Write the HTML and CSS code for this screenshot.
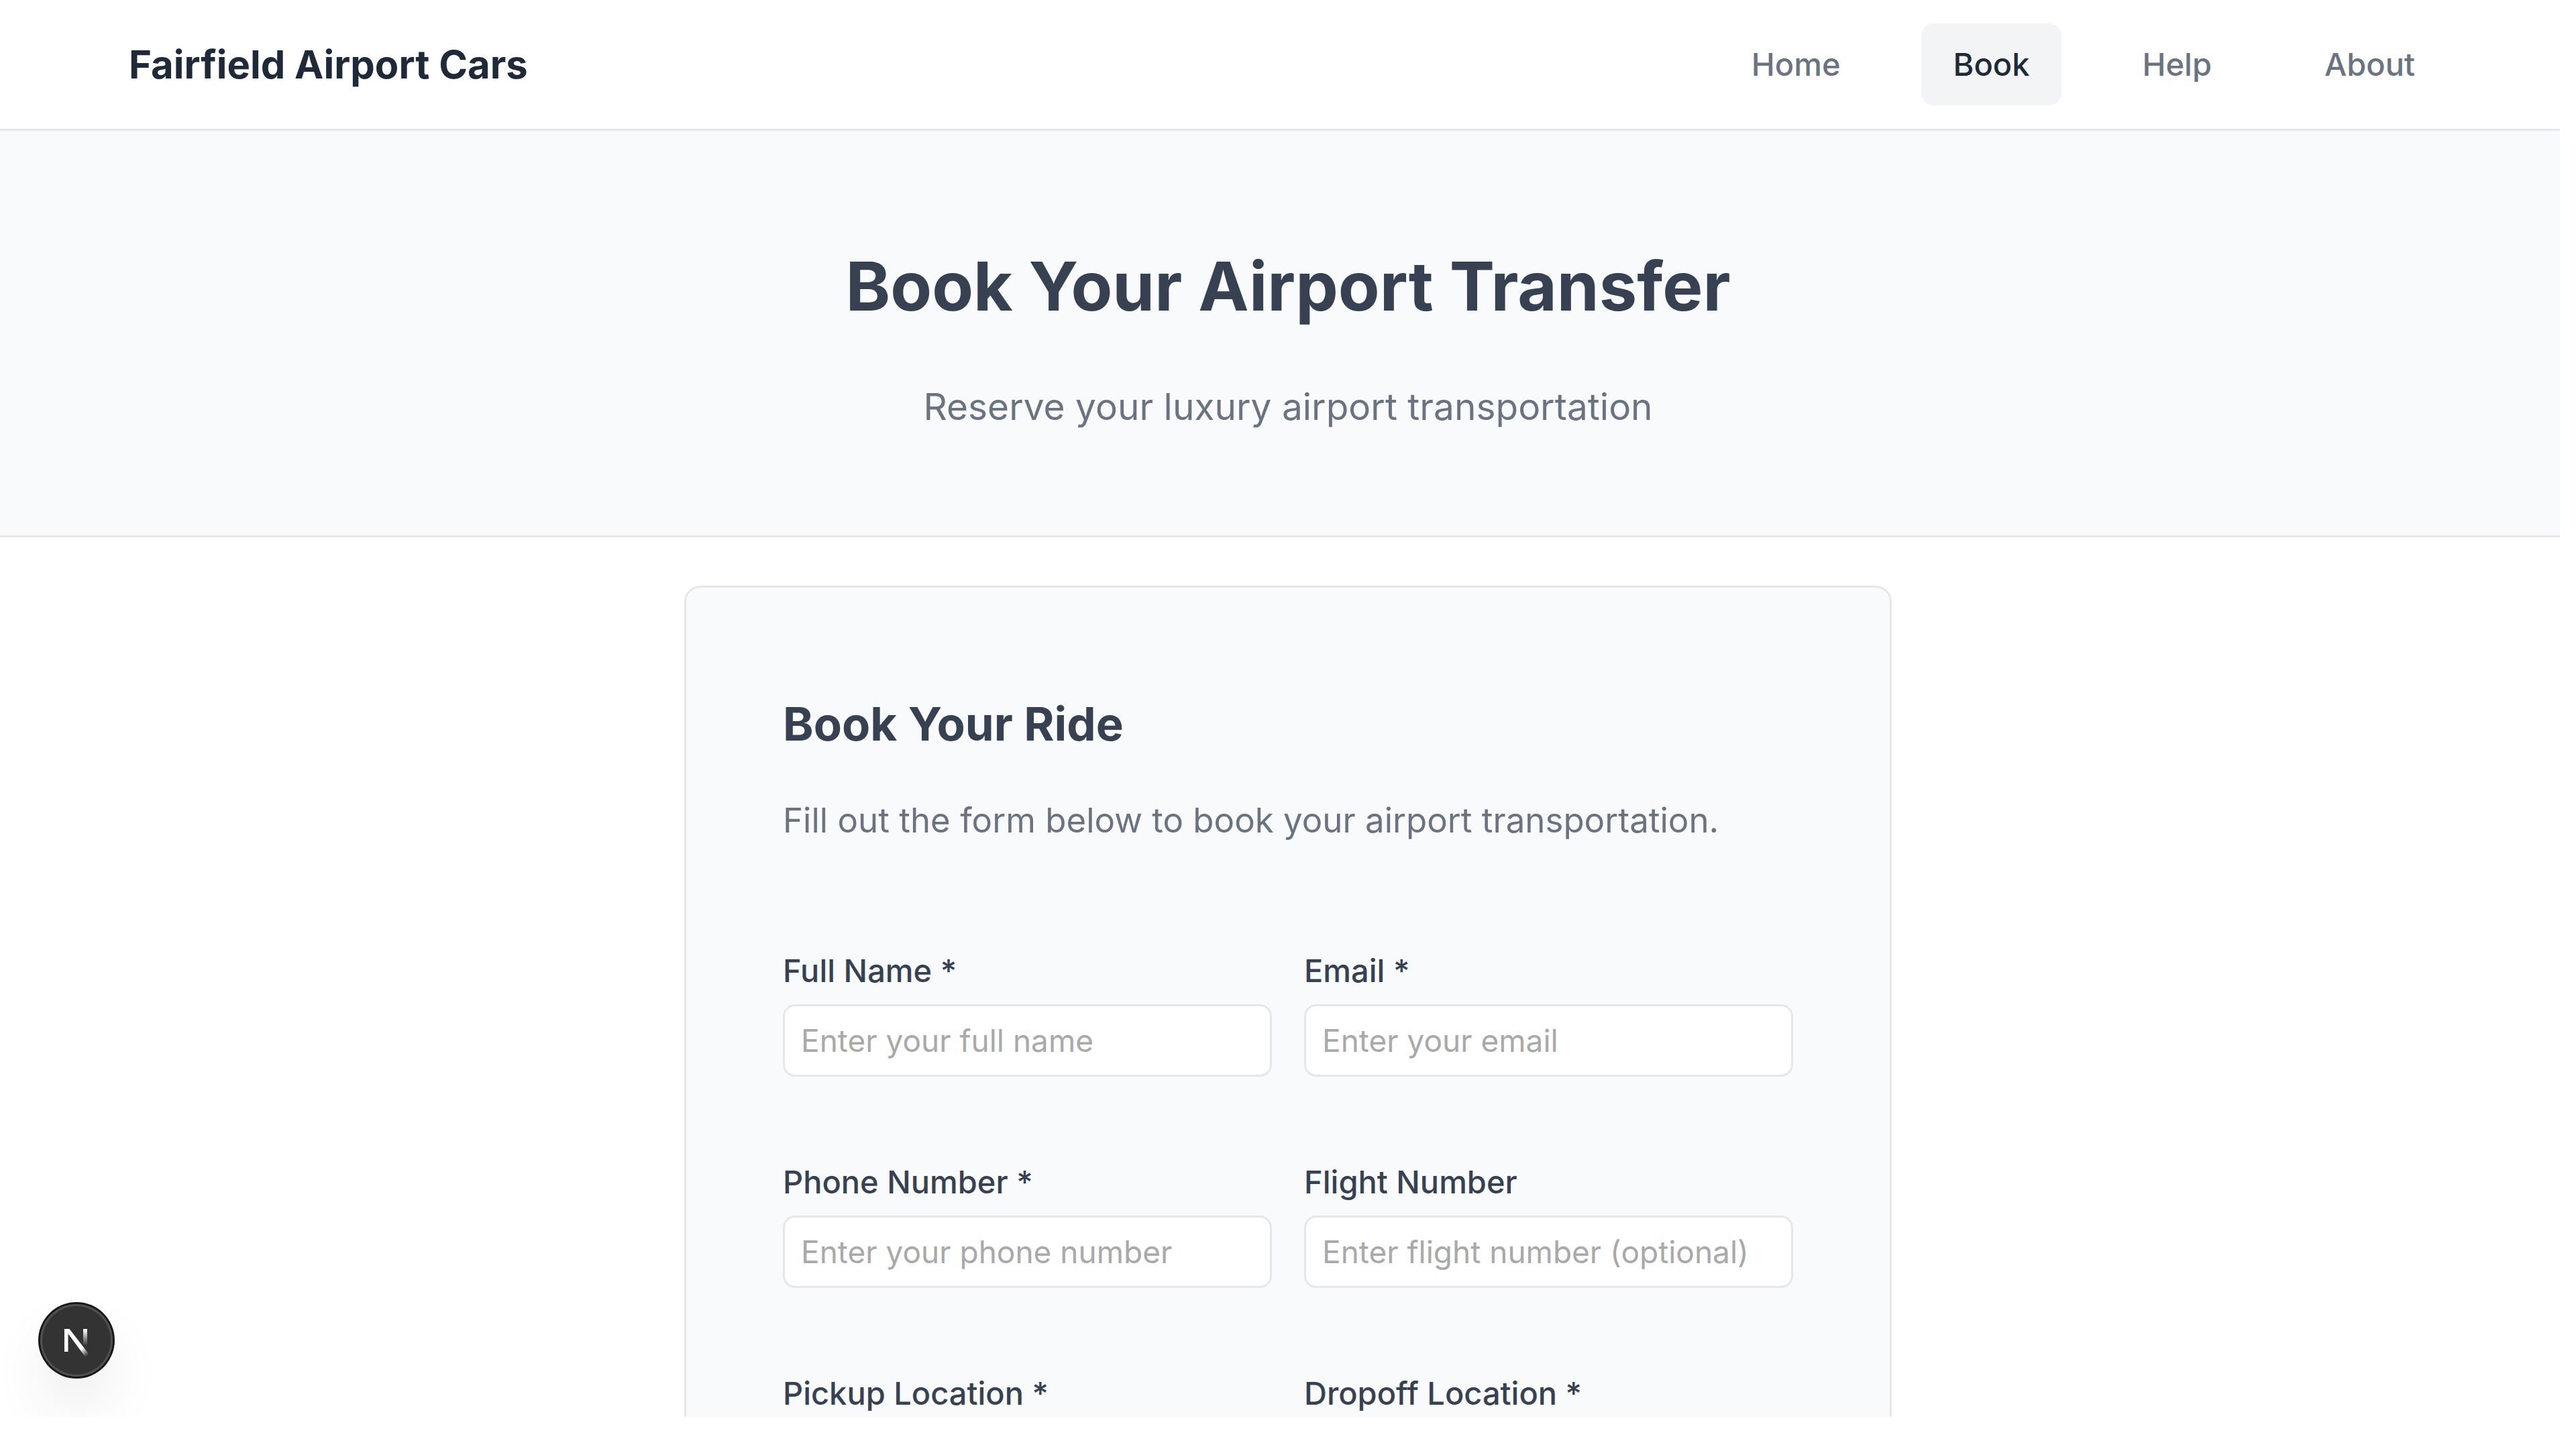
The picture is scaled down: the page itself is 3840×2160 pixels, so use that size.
FILE: index.html
```html
<!DOCTYPE html>
<html lang="en">
<head>
<meta charset="utf-8">
<meta name="viewport" content="width=device-width, initial-scale=1">
<title>Book Your Airport Transfer</title>
<link rel="stylesheet" href="styles.css">
</head>
<body>
<div class="viewport">
  <header class="site-header">
    <a class="brand" href="#">Fairfield Airport Cars</a>
    <nav class="nav">
      <a class="nav-link" href="#">Home</a>
      <a class="nav-link nav-link-active" href="#" aria-current="page">Book</a>
      <a class="nav-link" href="#">Help</a>
      <a class="nav-link" href="#">About</a>
    </nav>
  </header>
  <main>
    <section class="hero">
      <h1 class="hero-title">Book Your Airport Transfer</h1>
      <p class="hero-text">Reserve your luxury airport transportation</p>
    </section>
    <section class="content">
      <form class="card">
        <h2 class="card-title">Book Your Ride</h2>
        <p class="card-text">Fill out the form below to book your airport transportation.</p>
        <div class="fields">
          <div class="field">
            <label class="label" for="name">Full Name *</label>
            <input class="input" id="name" type="text" placeholder="Enter your full name">
          </div>
          <div class="field">
            <label class="label" for="email">Email *</label>
            <input class="input" id="email" type="email" placeholder="Enter your email">
          </div>
          <div class="field">
            <label class="label" for="phone">Phone Number *</label>
            <input class="input" id="phone" type="tel" placeholder="Enter your phone number">
          </div>
          <div class="field">
            <label class="label" for="flight">Flight Number</label>
            <input class="input" id="flight" type="text" placeholder="Enter flight number (optional)">
          </div>
          <div class="field">
            <label class="label" for="pickup">Pickup Location *</label>
            <input class="input" id="pickup" type="text">
          </div>
          <div class="field">
            <label class="label" for="dropoff">Dropoff Location *</label>
            <input class="input" id="dropoff" type="text">
          </div>
        </div>
      </form>
    </section>
  </main>
  <button class="dev-button" type="button" aria-label="Open developer tools">
    <svg class="dev-icon" viewBox="0 0 108 108" aria-hidden="true">
      <defs>
        <linearGradient id="fade-diagonal" gradientUnits="userSpaceOnUse" x1="62" y1="66" x2="70" y2="77">
          <stop offset="0" stop-color="#fff"/>
          <stop offset="1" stop-color="#fff" stop-opacity="0"/>
        </linearGradient>
        <linearGradient id="fade-stem" gradientUnits="userSpaceOnUse" x1="67" y1="38" x2="67" y2="62">
          <stop offset="0" stop-color="#fff"/>
          <stop offset="1" stop-color="#fff" stop-opacity="0"/>
        </linearGradient>
      </defs>
      <path fill="url(#fade-diagonal)" d="M36 37h7.5L73 75.2 68.4 80.4 41.5 44V71H36z"/>
      <path fill="url(#fade-stem)" d="M64 37h6v26h-6z"/>
    </svg>
  </button>
</div>
</body>
</html>
```
FILE: styles.css
```css
*,
*::before,
*::after {
  box-sizing: border-box;
}

body {
  margin: 0;
  background: #fff;
  color: #374151;
  font-family: Inter, "Liberation Sans", sans-serif;
}

h1,
h2,
p {
  margin: 0;
}

.viewport {
  position: relative;
  height: 100vh;
  overflow: hidden;
  clip-path: inset(0 24px 48px 0);
}

.site-header {
  display: flex;
  align-items: center;
  justify-content: space-between;
  padding: 35px 192px;
  border-bottom: 3px solid #e5e7eb;
}

.brand {
  color: #1f2937;
  font-size: 58px;
  font-weight: 700;
  line-height: 74px;
  text-decoration: none;
}

.nav {
  display: flex;
  gap: 72px;
}

.nav-link {
  padding: 24px 48px;
  border-radius: 18px;
  color: #6b7280;
  font-size: 47px;
  font-weight: 500;
  line-height: 74px;
  text-decoration: none;
}

.nav-link-active {
  background: #f3f4f6;
  color: #1f2937;
}

.hero {
  display: flex;
  flex-direction: column;
  gap: 46px;
  padding: 144px 48px;
  border-bottom: 3px solid #e5e7eb;
  background: #f9fafc;
  text-align: center;
}

.hero-title {
  font-size: 101px;
  font-weight: 700;
  line-height: 174px;
}

.hero-text {
  color: #6b7280;
  font-size: 55px;
  line-height: 95px;
}

.content {
  padding: 72px 48px;
}

.card {
  max-width: 1800px;
  margin: 0 auto;
  padding: 144px;
  border: 3px solid #e5e7eb;
  border-radius: 24px;
  background: #f9fafc;
}

.card-title {
  margin-bottom: 42px;
  font-size: 69px;
  font-weight: 700;
  line-height: 118px;
}

.card-text {
  margin-bottom: 144px;
  color: #6b7280;
  font-size: 51px;
  line-height: 86px;
}

.fields {
  display: grid;
  grid-template-columns: repeat(2, minmax(0, 1fr));
  gap: 120px 48px;
}

.field {
  display: flex;
  flex-direction: column;
  gap: 14px;
}

.label {
  font-size: 47px;
  font-weight: 500;
  line-height: 73px;
}

.input {
  width: 100%;
  height: 108px;
  padding: 0 24px;
  border: 3px solid #e5e7eb;
  border-radius: 18px;
  background: #fff;
  color: #374151;
  font-family: inherit;
  font-size: 46px;
}

.input::placeholder {
  color: #a9a9a9;
  opacity: 1;
}

/* Floats over the page in the bottom left corner */
.dev-button {
  position: absolute;
  bottom: 108px;
  left: 60px;
  width: 108px;
  height: 108px;
  padding: 0;
  border: 0;
  border-radius: 50%;
  background: #333;
  box-shadow:
    0 0 0 3px #171717,
    inset 0 0 0 3px #505050,
    0 48px 96px -24px rgba(0, 0, 0, 0.24);
}

.dev-icon {
  display: block;
  width: 100%;
  height: 100%;
}
```
